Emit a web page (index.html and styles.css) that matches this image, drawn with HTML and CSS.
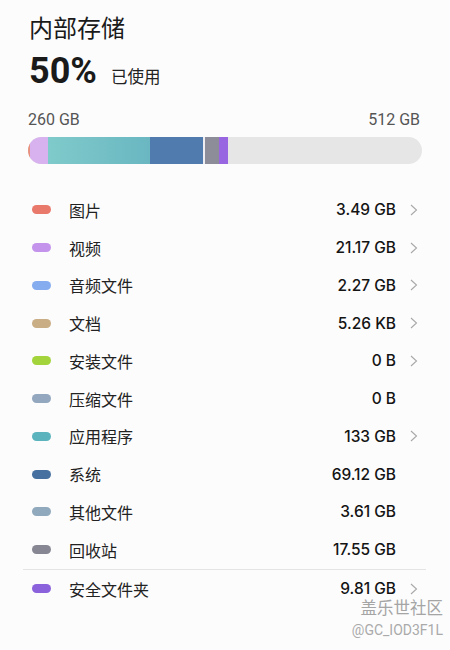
FILE: index.html
```html
<!DOCTYPE html>
<html lang="zh-CN">
<head>
    <meta charset="UTF-8">
    <meta name="viewport" content="width=device-width, initial-scale=1.0">
    <title>内部存储</title>
    <link rel="stylesheet" href="styles.css">
</head>
<body>
    <div class="page">
        <!-- Header -->
        <div class="header">
            <h1 class="title">内部存储</h1>
            <div class="usage">
                <span class="percent">50%</span>
                <span class="used">已使用</span>
            </div>
            <div class="capacity">
                <span>260 GB</span>
                <span>512 GB</span>
            </div>
            <div class="bar">
                <span class="seg seg-img" style="width: 2px"></span>
                <span class="seg seg-video" style="width: 18px"></span>
                <span class="seg seg-app" style="width: 102px"></span>
                <span class="seg seg-sys" style="width: 53px"></span>
                <span class="seg seg-gap" style="width: 2px"></span>
                <span class="seg seg-trash" style="width: 14px"></span>
                <span class="seg seg-safe" style="width: 8.5px"></span>
            </div>
        </div>

        <!-- Category list -->
        <ul class="list">
            <li class="row"><span class="dot c-img"></span><span class="label">图片</span><span class="size">3.49 GB</span><span class="arrow"><svg viewBox="0 0 8 12" width="8" height="12"><polyline points="1,1 6.5,6 1,11"/></svg></span></li>
            <li class="row"><span class="dot c-video"></span><span class="label">视频</span><span class="size">21.17 GB</span><span class="arrow"><svg viewBox="0 0 8 12" width="8" height="12"><polyline points="1,1 6.5,6 1,11"/></svg></span></li>
            <li class="row"><span class="dot c-audio"></span><span class="label">音频文件</span><span class="size">2.27 GB</span><span class="arrow"><svg viewBox="0 0 8 12" width="8" height="12"><polyline points="1,1 6.5,6 1,11"/></svg></span></li>
            <li class="row"><span class="dot c-doc"></span><span class="label">文档</span><span class="size">5.26 KB</span><span class="arrow"><svg viewBox="0 0 8 12" width="8" height="12"><polyline points="1,1 6.5,6 1,11"/></svg></span></li>
            <li class="row"><span class="dot c-apk"></span><span class="label">安装文件</span><span class="size">0 B</span><span class="arrow"><svg viewBox="0 0 8 12" width="8" height="12"><polyline points="1,1 6.5,6 1,11"/></svg></span></li>
            <li class="row"><span class="dot c-zip"></span><span class="label">压缩文件</span><span class="size">0 B</span><span class="arrow"></span></li>
            <li class="row"><span class="dot c-app"></span><span class="label">应用程序</span><span class="size">133 GB</span><span class="arrow"><svg viewBox="0 0 8 12" width="8" height="12"><polyline points="1,1 6.5,6 1,11"/></svg></span></li>
            <li class="row"><span class="dot c-sys"></span><span class="label">系统</span><span class="size">69.12 GB</span><span class="arrow"></span></li>
            <li class="row"><span class="dot c-other"></span><span class="label">其他文件</span><span class="size">3.61 GB</span><span class="arrow"></span></li>
            <li class="row"><span class="dot c-trash"></span><span class="label">回收站</span><span class="size">17.55 GB</span><span class="arrow"></span></li>
            <li class="row row-safe"><span class="dot c-safe"></span><span class="label">安全文件夹</span><span class="size">9.81 GB</span><span class="arrow"><svg viewBox="0 0 8 12" width="8" height="12"><polyline points="1,1 6.5,6 1,11"/></svg></span></li>
        </ul>
    </div>

    <!-- Watermark -->
    <div class="watermark">
        <div class="wm-name">盖乐世社区</div>
        <div class="wm-id">@GC_IOD3F1L</div>
    </div>
</body>
</html>
```

FILE: styles.css
```css
/* General Styles */
body {
    margin: 0;
    background-color: #fcfcfc;
    font-family: Roboto, "Noto Sans CJK SC", sans-serif;
    color: #1a1a1a;
}

.page {
    padding: 12px 24px 0 28px;
}

/* Header */
.title {
    margin: 0 0 0 1px;
    font-size: 24px;
    font-weight: 400;
    line-height: 34px;
    color: #1a1a1a;
}

.usage {
    display: flex;
    align-items: baseline;
    gap: 14px;
    height: 46px;
    margin: 2px 0 0 1px;
}

.percent {
    font-size: 36px;
    font-weight: 700;
    line-height: 46px;
}

.used {
    font-size: 16.5px;
    color: #222;
}

.capacity {
    display: flex;
    justify-content: space-between;
    margin-top: 16px;
    padding-right: 6px;
    font-size: 16px;
    line-height: 20px;
    color: #555;
}

.bar {
    display: flex;
    height: 27px;
    margin-top: 7px;
    margin-right: 4px;
    border-radius: 14px;
    overflow: hidden;
    background-color: #e6e6e6;
}

.seg {
    flex: none;
    height: 100%;
}

.seg-img { background-color: #e8917f; }
.seg-video { background-color: #d8b2ee; }
.seg-app { background: linear-gradient(to right, #7fcaca, #6ab7c2); }
.seg-sys { background-color: #4f7bae; }
.seg-gap { background-color: #eeeef2; }
.seg-trash { background-color: #8d8d9a; }
.seg-safe { background-color: #9866e0; }

/* List */
.list {
    list-style: none;
    margin: 27px 0 0 -5px;
    padding: 0;
}

.row {
    display: flex;
    align-items: center;
    height: 37.75px;
    padding-left: 9px;
}

.row-safe {
    border-top: 1px solid #e4e4e4;
    height: 38px;
}

.dot {
    width: 19px;
    height: 9px;
    border-radius: 5px;
    flex: none;
}

.c-img { background-color: #e8796b; }
.c-video { background-color: #c494ec; }
.c-audio { background-color: #86acf0; }
.c-doc { background-color: #c8ad85; }
.c-apk { background-color: #a3d43c; }
.c-zip { background-color: #93a7be; }
.c-app { background-color: #5bb4bd; }
.c-sys { background-color: #46709f; }
.c-other { background-color: #90a9bc; }
.c-trash { background-color: #878793; }
.c-safe { background-color: #8b62dc; }

.label {
    flex: 1;
    margin-left: 18px;
    font-size: 16px;
    color: #222;
}

.size {
    font-family: Inter, Roboto, sans-serif;
    font-size: 15.5px;
    font-weight: 500;
    color: #141414;
}

.arrow {
    display: flex;
    align-items: center;
    width: 30px;
    height: 12px;
    padding-left: 14px;
    box-sizing: border-box;
}

.arrow polyline {
    fill: none;
    stroke: #a8a8a8;
    stroke-width: 1.1;
}

/* Watermark */
.watermark {
    position: absolute;
    right: 7px;
    top: 597px;
    text-align: right;
    color: #a5a5a5;
}

.wm-name {
    font-size: 16.5px;
    line-height: 23px;
}

.wm-id {
    font-size: 14px;
    line-height: 20px;
    color: #aaa;
}
```
